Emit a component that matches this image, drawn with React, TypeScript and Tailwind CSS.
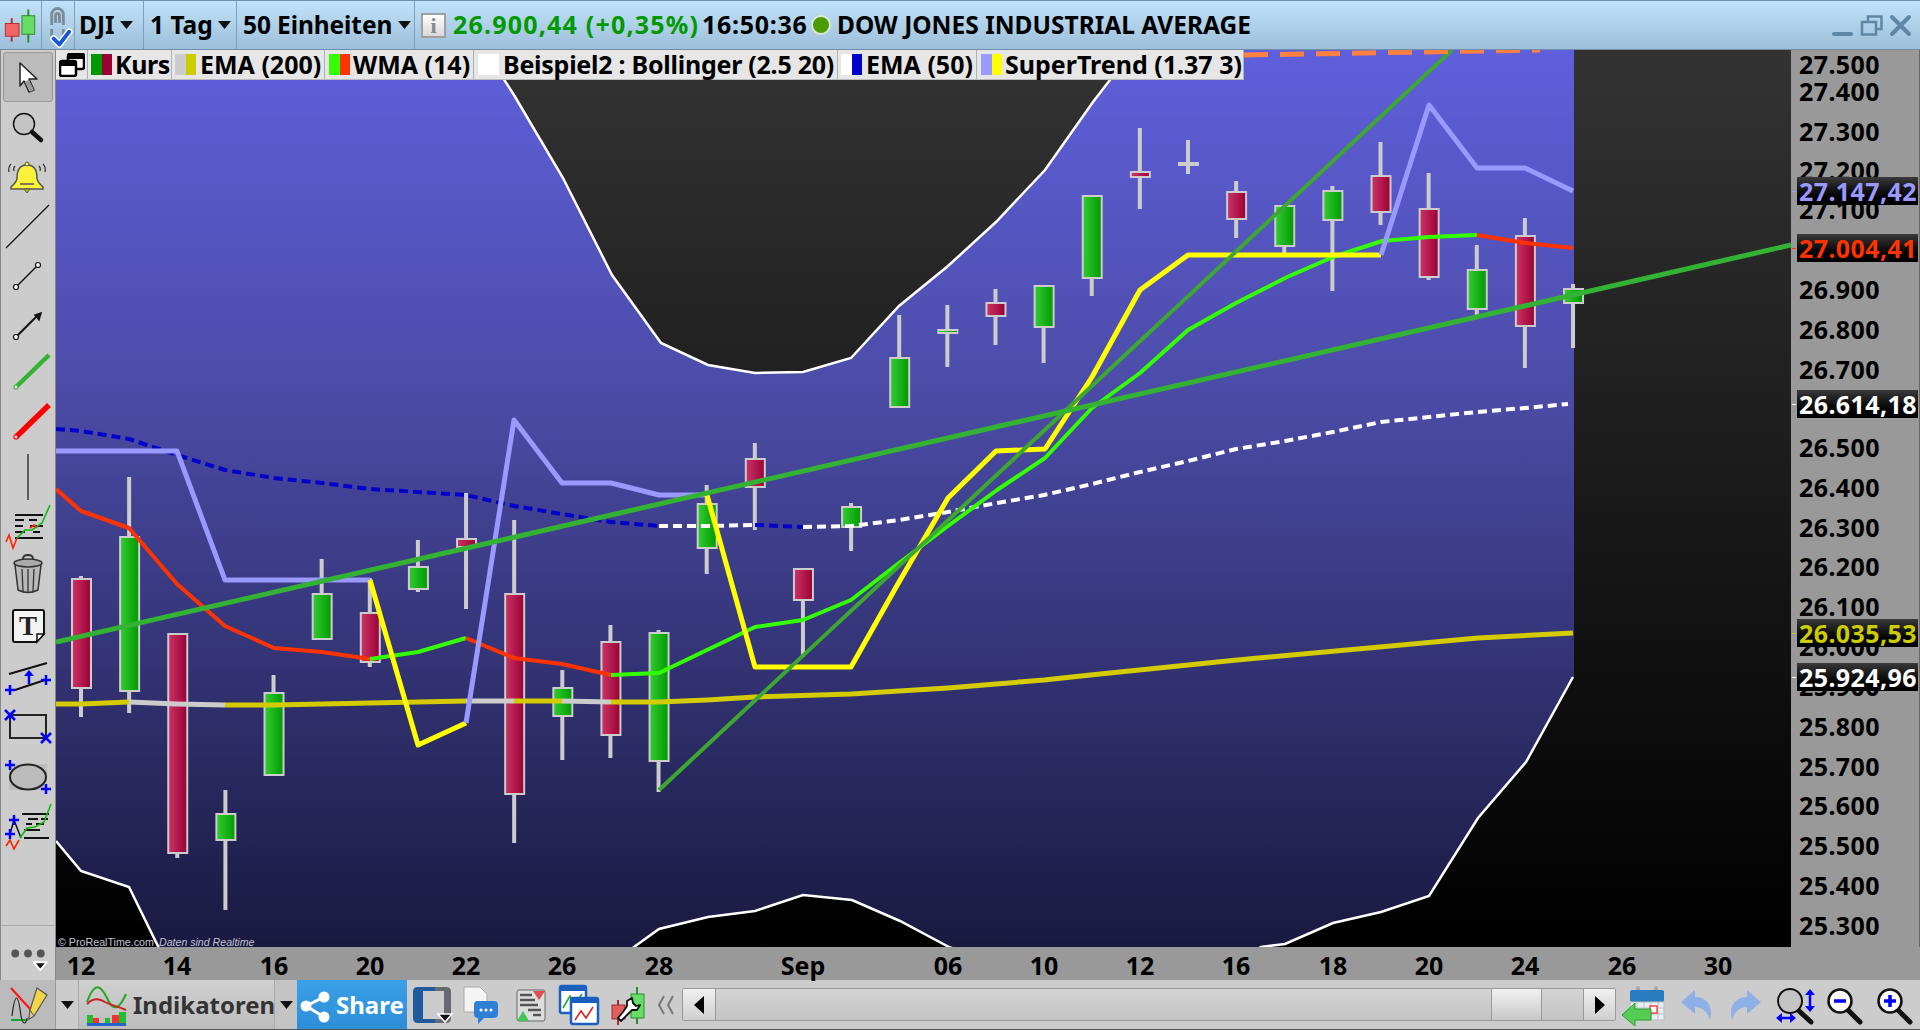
import React from 'react'

type Candle = [number, 'g' | 'r', number, number, number, number]

// wick top, body top, body bottom, wick bottom (page px)
const candles: Candle[] = [
  [0, 'r', 576, 578, 689, 717],
  [1, 'g', 477, 536, 692, 713],
  [2, 'r', 633, 633, 854, 858],
  [3, 'g', 790, 813, 841, 910],
  [4, 'g', 675, 692, 776, 776],
  [5, 'g', 559, 593, 640, 640],
  [6, 'r', 578, 612, 663, 667],
  [7, 'g', 540, 566, 590, 592],
  [8, 'r', 493, 538, 548, 609],
  [9, 'r', 520, 593, 795, 843],
  [10, 'g', 670, 687, 717, 760],
  [11, 'r', 625, 641, 736, 758],
  [12, 'g', 630, 632, 762, 792],
  [13, 'g', 485, 503, 549, 574],
  [14, 'r', 443, 458, 488, 530],
  [15, 'r', 568, 568, 601, 657],
  [16, 'g', 503, 506, 528, 551],
  [17, 'g', 315, 357, 408, 408],
  [18, 'g', 305, 329, 334, 367],
  [19, 'r', 289, 302, 317, 345],
  [20, 'g', 285, 285, 328, 363],
  [21, 'g', 195, 195, 279, 296],
  [22, 'r', 128, 171, 178, 209],
  [24, 'r', 181, 191, 220, 238],
  [25, 'g', 205, 205, 247, 255],
  [26, 'g', 186, 190, 221, 291],
  [27, 'r', 142, 175, 213, 225],
  [28, 'r', 173, 208, 278, 280],
  [29, 'g', 245, 269, 310, 316],
  [30, 'r', 218, 235, 327, 368],
  [31, 'g', 284, 288, 304, 348],
]

const prices: [string, number][] = [
  ['27.500', 64], ['27.400', 91], ['27.300', 131], ['27.200', 170], ['27.100', 209],
  ['26.900', 289], ['26.800', 329], ['26.700', 369], ['26.500', 447], ['26.400', 487],
  ['26.300', 527], ['26.200', 566], ['26.100', 606], ['26.000', 646], ['25.900', 686],
  ['25.800', 726], ['25.700', 766], ['25.600', 805], ['25.500', 845], ['25.400', 885], ['25.300', 925],
]

const tags: [string, number, string][] = [
  ['27.147,42', 191, '#9999ff'],
  ['27.004,41', 248, '#ff3300'],
  ['26.614,18', 404, '#ffffff'],
  ['26.035,53', 633, '#cccc00'],
  ['25.924,96', 677, '#ffffff'],
]

const dates: [string, number][] = [
  ['12', 81], ['14', 177], ['16', 274], ['20', 370], ['22', 466], ['26', 562], ['28', 659], ['Sep', 803],
  ['06', 948], ['10', 1044], ['12', 1140], ['16', 1236], ['18', 1333], ['20', 1429], ['24', 1525], ['26', 1622], ['30', 1718],
]

const upper = '485,50 514,95 563,178 612,275 661,343 708,365 755,373 803,372 851,358 899,306 948,266 996,222 1045,170 1093,102 1133,50'
const lower = '56,841 81,871 129,887 177,985 611,965 634,947 659,929 708,917 755,911 803,895 852,900 900,921 949,947 1000,965 1230,965 1261,947 1285,944 1333,923 1381,912 1429,896 1478,818 1526,762 1573,677'
const bluePoly = `56,50 ${upper} 1574,50 1574,677 ${lower.split(' ').reverse().join(' ')}`

function Chart() {
  return (
    <svg width="1735" height="897" viewBox="56 50 1735 897" className="block shrink-0">
      <defs>
        <linearGradient id="dark" gradientUnits="userSpaceOnUse" x1="0" y1="50" x2="0" y2="947">
          <stop offset="0" stopColor="#333333" />
          <stop offset="1" stopColor="#000000" />
        </linearGradient>
        <linearGradient id="blue" gradientUnits="userSpaceOnUse" x1="0" y1="50" x2="0" y2="947">
          <stop offset="0" stopColor="#5f5fdc" />
          <stop offset="0.39" stopColor="#4b4ba6" />
          <stop offset="1" stopColor="#191940" />
        </linearGradient>
        <linearGradient id="cg">
          <stop offset="0" stopColor="#33cc33" />
          <stop offset="1" stopColor="#009900" />
        </linearGradient>
        <linearGradient id="cr">
          <stop offset="0" stopColor="#cc3366" />
          <stop offset="1" stopColor="#990033" />
        </linearGradient>
      </defs>
      <rect x="56" y="50" width="1735" height="897" fill="url(#dark)" />
      <polygon points={bluePoly} fill="url(#blue)" />
      <polyline points={upper} fill="none" stroke="#fff" strokeWidth="2.5" />
      <polyline points={lower} fill="none" stroke="#fff" strokeWidth="2.5" />

      {candles.map(([i, c, wt, bt, bb, wb]) => {
        const x = 81 + 48.13 * i
        return (
          <g key={i}>
            <rect x={x - 2} y={wt} width="4" height={wb - wt} fill="#cccccc" />
            <rect x={x - 9} y={bt + 1} width="19" height={bb - bt - 2} fill={c === 'g' ? 'url(#cg)' : 'url(#cr)'} stroke="#cccccc" strokeWidth="2" />
          </g>
        )
      })}
      {/* doji without body */}
      <rect x="1186" y="140" width="4" height="34" fill="#cccccc" />
      <rect x="1178" y="162" width="21" height="4" fill="#cccccc" />

      {/* EMA 200 */}
      <g fill="none" strokeWidth="5">
        <polyline points="56,704 81,704 129,702" stroke="#d4cc00" />
        <polyline points="129,702 177,704 225,705" stroke="#cccccc" />
        <polyline points="225,705 274,705 370,703 466,701" stroke="#d4cc00" />
        <polyline points="466,701 514,701" stroke="#cccccc" />
        <polyline points="514,701 562,701" stroke="#d4cc00" />
        <polyline points="562,701 611,702" stroke="#cccccc" />
        <polyline points="611,702 659,702 707,700 755,697 851,694 899,691 948,688 996,684 1044,680 1100,674 1237,660 1478,638 1573,633" stroke="#d4cc00" />
      </g>

      {/* EMA 50 */}
      <g fill="none" strokeWidth="4" strokeDasharray="9 5">
        <polyline points="56,429 81,431 129,439 177,455 225,470 274,478 322,483 370,489 418,492 466,495 514,506 562,514 611,522 659,526" stroke="#0000cc" />
        <polyline points="659,526 707,526 755,525" stroke="#ffffff" />
        <polyline points="755,525 803,527" stroke="#0000cc" />
        <polyline points="803,527 851,526 899,520 948,512 997,503 1044,495 1092,484 1140,472 1188,461 1236,449 1285,441 1333,432 1381,422 1429,417 1477,412 1525,408 1568,404" stroke="#ffffff" />
      </g>

      {/* WMA 14 */}
      <g fill="none" strokeWidth="4" strokeLinejoin="round">
        <polyline points="56,489 81,511 129,528 177,584 225,626 274,648 322,652 370,659" stroke="#ff3300" />
        <polyline points="370,659 418,652 466,638" stroke="#33ff00" />
        <polyline points="466,638 514,658 562,664 611,675" stroke="#ff3300" />
        <polyline points="611,675 659,673 707,650 755,627 803,620 851,600 899,563 948,526 997,490 1045,458 1092,408 1140,373 1188,330 1236,303 1285,278 1333,257 1382,241 1429,237 1477,235" stroke="#33ff00" />
        <polyline points="1477,235 1525,243 1573,248" stroke="#ff3300" />
      </g>

      {/* SuperTrend */}
      <g fill="none" strokeWidth="5" strokeLinejoin="round">
        <polyline points="56,451 177,451 225,580 370,580" stroke="#9999ff" />
        <polyline points="370,580 418,745 466,723" stroke="#ffff00" />
        <polyline points="466,723 514,420 562,483 611,483 659,495 707,495" stroke="#9999ff" />
        <polyline points="707,495 755,667 851,667 899,582 948,498 996,451 1045,449 1092,377 1140,290 1188,255 1381,255" stroke="#ffff00" />
        <polyline points="1381,255 1429,105 1477,168 1525,168 1573,191" stroke="#9999ff" />
      </g>

      {/* trend lines */}
      <line x1="659" y1="790" x2="1452" y2="50" stroke="#3da82f" strokeWidth="4" />
      <line x1="56" y1="642" x2="1791" y2="245" stroke="#33b233" strokeWidth="5" />
      <line x1="1244" y1="55" x2="1540" y2="50" stroke="#ff8040" strokeWidth="5" strokeDasharray="24 12" />

      <text x="58" y="946" fill="#c4c4d4" fontSize="10.7" fontFamily="Liberation Sans, sans-serif">© ProRealTime.com</text>
      <text x="159" y="946" fill="#c4c4d4" fontSize="10.6" fontStyle="italic" fontFamily="Liberation Sans, sans-serif">Daten sind Realtime</text>
    </svg>
  )
}

function Caret() {
  return (
    <svg width="13" height="8" viewBox="0 0 13 8" className="block shrink-0">
      <path d="M0 0H13L6.5 8Z" fill="#111" />
    </svg>
  )
}

function Swatch({ a, b }: { a: string; b: string }) {
  return (
    <span className="flex h-[21px] w-[21px] shrink-0">
      <span className="h-full flex-1" style={{ background: a }} />
      <span className="h-full flex-1" style={{ background: b }} />
    </span>
  )
}

function TopBar() {
  return (
    <div className="flex h-[50px] items-stretch border-y border-[#6d8fab] bg-gradient-to-b from-[#c0e2fa] to-[#9ebfd9] text-[24.5px] font-bold text-black">
      <div className="flex w-[42px] items-center border-r border-[#7da0bd]">
        <svg width="42" height="48" viewBox="0 0 42 48">
          <path d="M29 8V42" stroke="#2e8b2e" strokeWidth="2" />
          <path d="M12 17V41" stroke="#b03030" strokeWidth="2" />
          <rect x="5.5" y="22.5" width="14" height="13" fill="#f06565" stroke="#b03030" />
          <rect x="22.5" y="14.5" width="13" height="19" fill="#66dd66" stroke="#2e8b2e" />
        </svg>
      </div>
      <div className="flex w-[33px] items-center border-r border-[#7da0bd]">
        <svg width="33" height="48" viewBox="42 0 33 48">
          <path d="M52 24V13a6 6 0 0 1 12 0V24M56 22V14a2 2 0 0 1 4 0V22" fill="none" stroke="#7d8c99" strokeWidth="3" />
          <path d="M52 28V34a6 6 0 0 0 12 0V28" fill="none" stroke="#7d8c99" strokeWidth="3" />
          <path d="M54 38L60 44L70 31" fill="none" stroke="#fff" strokeWidth="7" strokeLinecap="round" strokeLinejoin="round" />
          <path d="M54 38L60 44L70 31" fill="none" stroke="#1a56d8" strokeWidth="4" strokeLinecap="round" strokeLinejoin="round" />
        </svg>
      </div>
      <div className="flex w-[69px] items-center gap-[5px] border-r border-[#7da0bd] pl-[4px]">
        <span>DJI</span><Caret />
      </div>
      <div className="flex w-[93px] items-center gap-[5px] border-r border-[#7da0bd] pl-[6px]">
        <span>1 Tag</span><Caret />
      </div>
      <div className="flex w-[178px] items-center gap-[6px] border-r border-[#7da0bd] pl-[6px]">
        <span className="tracking-[-0.1px]">50 Einheiten</span><Caret />
      </div>
      <div className="flex flex-1 items-center">
        <div className="ml-[6px] flex h-[25px] w-[25px] items-center justify-center border-2 border-[#a0a0a0] bg-gradient-to-b from-white to-[#d8d8d8] font-['Liberation_Serif',serif] text-[22px] text-[#888]">i</div>
        <span className="ml-[7px] w-[249px] shrink-0 text-[25px] tracking-[1.2px] text-[#009900]">26.900,44 (+0,35%)</span>
        <span className="w-[109px] shrink-0 text-[25px] tracking-[0.7px]">16:50:36</span>
        <span className="h-[20px] w-[20px] shrink-0 rounded-full border-2 border-[#dbe8dd] bg-[#4a9d00]" />
        <span className="ml-[6px]">DOW JONES INDUSTRIAL AVERAGE</span>
        <svg width="90" height="48" viewBox="1830 0 90 48" className="ml-auto">
          <path d="M1834 33H1851" stroke="#5f86a5" strokeWidth="4" strokeLinecap="round" />
          <path d="M1868 20V15.5H1881.5V28H1876" fill="none" stroke="#5f86a5" strokeWidth="2.5" />
          <rect x="1862" y="21" width="14" height="12.5" fill="none" stroke="#5f86a5" strokeWidth="2.5" />
          <path d="M1892 16L1909 33M1909 16L1892 33" stroke="#5f86a5" strokeWidth="4" strokeLinecap="round" />
        </svg>
      </div>
    </div>
  )
}

function Legend() {
  const item = 'flex h-full shrink-0 items-center border-r border-[#b0b0b0]'
  return (
    <div className="absolute left-0 top-0 flex h-[30px] items-stretch border-b border-[#bbbbbb] bg-[#e6e6e6] text-[25px] font-bold text-black">
      <div className={`${item} w-[32px] justify-center`}>
        <svg width="26" height="24" viewBox="0 0 26 24">
          <rect x="9" y="1" width="16" height="15" rx="2" fill="#fff" stroke="#000" strokeWidth="2.5" />
          <rect x="1" y="8" width="16" height="15" rx="2" fill="#fff" stroke="#000" strokeWidth="2.5" />
          <path d="M9 6H25V3L23 1H11L9 3Z M1 13H17V10L15 8H3L1 10Z" fill="#000" />
        </svg>
      </div>
      <div className={`${item} w-[84px] gap-[3px] pl-[3px]`}><Swatch a="#009900" b="#990033" /><span className="tracking-[-0.4px]">Kurs</span></div>
      <div className={`${item} w-[153px] gap-[4px] pl-[3px]`}><Swatch a="#cccccc" b="#cccc00" />EMA (200)</div>
      <div className={`${item} w-[149px] gap-[3px] pl-[4px]`}><Swatch a="#33ff00" b="#ff3300" />WMA (14)</div>
      <div className={`${item} w-[364px] gap-[4px] pl-[4px]`}><Swatch a="#ffffff" b="#ffffff" /><span className="tracking-[-0.25px]">Beispiel2 : Bollinger (2.5 20)</span></div>
      <div className={`${item} w-[139px] gap-[4px] pl-[3px]`}><Swatch a="#ffffff" b="#0000cc" />EMA (50)</div>
      <div className={`${item} w-[267px] gap-[3px] pl-[4px]`}><Swatch a="#9999ff" b="#ffff00" />SuperTrend (1.37 3)</div>
    </div>
  )
}

function PriceAxis() {
  return (
    <div className="relative h-full w-[129px] border-r border-[#666] bg-[#999999] text-[25px] font-bold leading-none tracking-[0.4px] text-black">
      {prices.map(([p, y]) => (
        <span key={p} className="absolute left-[8px] -translate-y-1/2" style={{ top: y - 50 }}>{p}</span>
      ))}
      {tags.map(([p, y, c]) => (
        <React.Fragment key={p}>
          <span className="absolute left-[1px] h-[1px] w-[4px]" style={{ top: y - 50, background: c }} />
          <span
            className="absolute left-[6px] flex h-[28px] w-[121px] items-center bg-gradient-to-b from-[#3a3a3a] to-black pl-[2px]"
            style={{ top: y - 64, color: c }}
          >
            {p}
          </span>
        </React.Fragment>
      ))}
    </div>
  )
}

function ToolIcon({ base, children }: { base: number; children?: React.ReactNode }) {
  return (
    <svg width="50" height="50" viewBox={`3 ${base} 50 50`} className="block overflow-visible">
      {children}
    </svg>
  )
}

const Plus = ({ x, y }: { x: number; y: number }) => (
  <path d={`M${x - 5} ${y}H${x + 5}M${x} ${y - 5}V${y + 5}`} stroke="#0000ff" strokeWidth="2.5" />
)
const Cross = ({ x, y }: { x: number; y: number }) => (
  <path d={`M${x - 5} ${y - 5}L${x + 5} ${y + 5}M${x + 5} ${y - 5}L${x - 5} ${y + 5}`} stroke="#0000ff" strokeWidth="2.5" />
)

function LeftToolbar() {
  return (
    <div className="flex w-[56px] shrink-0 flex-col border-x border-[#888] bg-[#cccccc] pt-[2px]">
      <div className="ml-[2px] h-[50px] w-[50px] rounded-[3px] border border-[#999] bg-[#bbbbbb]">
        <svg width="48" height="48" viewBox="4 53 48 48" className="block">
          <path d="M20 63L37 79H29L34 90L29 92L24 81L20 86Z" fill="#fff" stroke="#222" strokeWidth="1.5" strokeLinejoin="round" />
          <path d="M29 80L34 90L30 92L25 81Z" fill="#999" />
        </svg>
      </div>
      <div className="ml-[2px]">
        <ToolIcon base={102}>
          <circle cx="24" cy="124" r="10.5" fill="#c4c4c4" stroke="#111" strokeWidth="1.5" />
          <path d="M32 132L41 140" stroke="#111" strokeWidth="4.5" strokeLinecap="round" />
        </ToolIcon>
        <ToolIcon base={152}>
          <path d="M27 165c-7 0-10 5-10 13c0 4-3 6-6 9v2h32v-2c-3-3-6-5-6-9c0-8-3-13-10-13z" fill="#fbf23c" stroke="#555" strokeWidth="1.5" />
          <path d="M20 184H34" stroke="#555" strokeWidth="1.5" />
          <path d="M24 189h6l-3 4z" fill="#c9b800" stroke="#555" />
          <circle cx="27" cy="164" r="2" fill="#fbf23c" stroke="#555" />
          <path d="M11 164q-3 3-2 8M15 166q-2 2-1 5M43 164q3 3 2 8M39 166q2 2 1 5" fill="none" stroke="#333" strokeWidth="1.2" />
        </ToolIcon>
        <ToolIcon base={202}><path d="M6 248L49 205" stroke="#111" strokeWidth="1.3" /></ToolIcon>
        <ToolIcon base={252}>
          <path d="M16 287L38 265" stroke="#111" strokeWidth="1.5" />
          <circle cx="16" cy="287" r="2.5" fill="#fff" stroke="#111" strokeWidth="1.2" />
          <circle cx="38" cy="265" r="2.5" fill="#fff" stroke="#111" strokeWidth="1.2" />
        </ToolIcon>
        <ToolIcon base={302}>
          <path d="M16 337L38 315" stroke="#111" strokeWidth="2" />
          <path d="M41 313L35 315L39 320Z" fill="#111" stroke="#111" strokeWidth="1.5" />
          <circle cx="16" cy="337" r="2.5" fill="#fff" stroke="#111" strokeWidth="1.2" />
        </ToolIcon>
        <ToolIcon base={352}>
          <path d="M16 387L49 355" stroke="#33b233" strokeWidth="4.5" />
          <circle cx="16" cy="387" r="2" fill="#fff" stroke="#33b233" strokeWidth="1.2" />
        </ToolIcon>
        <ToolIcon base={402}>
          <path d="M16 437L49 405" stroke="#ff0000" strokeWidth="5.5" />
          <circle cx="16" cy="437" r="2" fill="#fff" stroke="#ff0000" strokeWidth="1.2" />
        </ToolIcon>
        <ToolIcon base={452}><path d="M28 454V500" stroke="#111" strokeWidth="1.2" /></ToolIcon>
        <ToolIcon base={502}>
          <path d="M15 515H43M15 520H24M29 520H37M15 526H23M30 526H43M15 532H25M33 532H40M15 538H43" stroke="#111" strokeWidth="1.8" />
          <path d="M6 542L9 535L13 548L17 538" fill="none" stroke="#ff2200" strokeWidth="1.6" />
          <path d="M17 538L25 530L32 530L42 523L50 505" fill="none" stroke="#11bb11" strokeWidth="1.6" />
          <path d="M30 528L34 525L37 528" fill="none" stroke="#ff2200" strokeWidth="1.6" />
        </ToolIcon>
        <ToolIcon base={552}>
          <path d="M15 565L18 590Q28 595 38 590L41 565Z" fill="#b8b8b8" stroke="#333" strokeWidth="1.5" />
          <path d="M22 569L23 591M28 569V592M34 569L33 591" stroke="#333" strokeWidth="1.3" />
          <ellipse cx="28" cy="563" rx="14" ry="4" fill="#aaa" stroke="#333" strokeWidth="1.5" />
          <path d="M23 559q0-4 5-4t5 4" fill="none" stroke="#333" strokeWidth="1.8" />
        </ToolIcon>
        <ToolIcon base={602}>
          <path d="M13 612a2 2 0 0 1 2-2H42a2 2 0 0 1 2 2V634L36 642H15a2 2 0 0 1-2-2Z" fill="#f3f3f3" stroke="#111" strokeWidth="2" />
          <path d="M44 634H37V642Z" fill="#fff" stroke="#111" strokeWidth="1.5" />
          <text x="28" y="635" textAnchor="middle" fontSize="27" fontWeight="700" fontFamily="Liberation Serif, serif" fill="#222">T</text>
        </ToolIcon>
        <ToolIcon base={652}>
          <path d="M9 674L47 663M15 690L45 680" stroke="#111" strokeWidth="2" />
          <path d="M29 684V674" stroke="#0000ff" strokeWidth="2.5" />
          <path d="M24 676L29 670L34 676Z" fill="#0000ff" />
          <Plus x={10} y={690} />
          <Plus x={46} y={680} />
        </ToolIcon>
        <ToolIcon base={702}>
          <rect x="10" y="715" width="36" height="23" fill="none" stroke="#222" strokeWidth="2" />
          <Cross x={10} y={715} />
          <Cross x={46} y={738} />
        </ToolIcon>
        <ToolIcon base={752}>
          <rect x="9" y="764" width="38" height="26" fill="#bcbcbc" />
          <ellipse cx="28" cy="777" rx="18" ry="12.5" fill="none" stroke="#222" strokeWidth="2" />
          <Plus x={10} y={765} />
          <Plus x={46} y={789} />
        </ToolIcon>
        <ToolIcon base={802}>
          <path d="M22 814H49M28 819H38M41 819H48M26 824H32M36 824H44M24 830H40M24 838H49" stroke="#111" strokeWidth="1.8" />
          <path d="M10 834L14 820L21 838" fill="none" stroke="#111" strokeWidth="1.5" />
          <path d="M20 838L27 828L35 827L44 822L51 804" fill="none" stroke="#11bb11" strokeWidth="1.6" />
          <path d="M6 846L10 840L14 849L19 840" fill="none" stroke="#ff2200" strokeWidth="1.6" />
          <Plus x={14} y={820} />
          <Plus x={10} y={834} />
        </ToolIcon>
      </div>
      <div className="mt-auto flex h-[55px] flex-col border-t border-[#aaaaaa]">
        <svg width="54" height="55" viewBox="1 925 54 55" className="block">
          <circle cx="15" cy="953" r="4" fill="#555" />
          <circle cx="28" cy="953" r="4" fill="#555" />
          <circle cx="41" cy="953" r="4" fill="#555" />
          <path d="M34 962H47L40.5 970Z" fill="#111" stroke="#fff" strokeWidth="2" strokeLinejoin="round" />
        </svg>
      </div>
    </div>
  )
}

function Icon({ x, w, children }: { x: number; w: number; children?: React.ReactNode }) {
  return (
    <svg width={w} height="50" viewBox={`${x} 980 ${w} 50`} className="block shrink-0">
      {children}
    </svg>
  )
}

function BottomBar() {
  return (
    <div className="flex h-[50px] items-stretch border-b border-[#555] bg-[#cccccc]">
      <div className="w-[56px] shrink-0 border-r border-[#999] bg-[#bbbbbb]">
        <Icon x={0} w={55}>
          <path d="M11 1020H28" stroke="#11aa33" strokeWidth="2" />
          <path d="M12 1016c3-24 6-24 9 0c2 10 5 8 6 2" fill="none" stroke="#222" strokeWidth="1.2" />
          <path d="M11 988L31 1010" stroke="#ff1111" strokeWidth="2" />
          <path d="M37 988L47 995L34 1016L29 1019L30 1010Z" fill="#f4d548" stroke="#555" strokeWidth="1.2" />
          <path d="M30 1010L34 1016L29 1019Z" fill="#e9c4a0" stroke="#555" strokeWidth="1" />
        </Icon>
      </div>
      <div className="flex w-[23px] shrink-0 items-center justify-center border-r border-[#aaa]"><Caret /></div>
      <div className="flex w-[196px] shrink-0 items-center border-r border-[#aaa] bg-gradient-to-b from-[#d0d0d0] to-[#bdbdbd]">
        <Icon x={79} w={52}>
          <path d="M87 1002c8-22 14-16 20-4c6 14 12 12 19-4" fill="none" stroke="#22aa22" strokeWidth="2" />
          <path d="M87 1004c6-6 12-6 18-2c7 4 13 4 21 8" fill="none" stroke="#cc2222" strokeWidth="2" />
          <path d="M87 1015h6v8h-6zM105 1018h5v5h-5zM119 1012h7v11h-7z" fill="#22bb33" />
          <path d="M93 1018h6v5h-6zM112 1015h7v8h-7z" fill="#ee3333" />
          <rect x="87" y="1023" width="39" height="3" fill="#2266cc" />
        </Icon>
        <span className="ml-[2px] text-[24px] font-bold text-[#333]">Indikatoren</span>
      </div>
      <div className="flex w-[22px] shrink-0 items-center justify-center bg-[#c4c4c4]"><Caret /></div>
      <div className="flex w-[110px] shrink-0 items-center bg-gradient-to-b from-[#3aa0e8] to-[#2d8ed8] text-[24px] font-bold text-white">
        <Icon x={297} w={37}>
          <path d="M306 1006L324 997M306 1006L324 1017" stroke="#fff" strokeWidth="3" />
          <circle cx="306" cy="1006" r="5.5" fill="#fff" />
          <circle cx="324" cy="997" r="5.5" fill="#fff" />
          <circle cx="324" cy="1017" r="5.5" fill="#fff" />
        </Icon>
        <span className="ml-[2px]">Share</span>
      </div>
      <Icon x={407} w={50}>
        <path d="M435 987H418Q413 987 413 992V1018Q413 1023 418 1023H435V1019H423V991H435Z" fill="#1f5a9c" />
        <path d="M435 987H446Q451 987 451 992V1018Q451 1023 446 1023H435V1019H444V991H435Z" fill="#666a70" />
        <path d="M438 1014H452L445 1022Z" fill="#111" stroke="#fff" strokeWidth="1.5" />
      </Icon>
      <Icon x={457} w={50}>
        <path d="M464 987H480L487 994V1012H464Z" fill="#f4f4f4" stroke="#aaa" />
        <path d="M477 1001H494Q498 1001 498 1005V1014Q498 1018 494 1018H484L478 1024V1018Q474 1018 474 1014V1005Q474 1001 477 1001Z" fill="#2f7fd6" />
        <circle cx="481" cy="1010" r="1.5" fill="#fff" />
        <circle cx="486" cy="1010" r="1.5" fill="#fff" />
        <circle cx="491" cy="1010" r="1.5" fill="#fff" />
      </Icon>
      <Icon x={507} w={50}>
        <rect x="517" y="990" width="28" height="31" rx="2" fill="#ddd" stroke="#666" />
        <path d="M520 995H532M520 1000H535M520 1005H538M528 1010H541M533 1015H541" stroke="#555" strokeWidth="2.5" />
        <path d="M533 991H545L539 1000Z" fill="#e05050" />
        <path d="M517 1021L523 1011L529 1021Z" fill="#44c455" />
      </Icon>
      <Icon x={557} w={48}>
        <rect x="560" y="986" width="26" height="27" rx="2" fill="#fff" stroke="#1a5fc0" strokeWidth="2.5" />
        <rect x="561" y="986" width="24" height="5" fill="#1a5fc0" />
        <path d="M563 1008L570 996L575 1004L582 994" fill="none" stroke="#22aa22" strokeWidth="1.6" />
        <rect x="571" y="998" width="27" height="26" rx="2" fill="#fff" stroke="#1a5fc0" strokeWidth="2.5" />
        <rect x="572" y="998" width="25" height="5" fill="#1a5fc0" />
        <path d="M575 1020L581 1011L586 1018L593 1007" fill="none" stroke="#dd2222" strokeWidth="1.6" />
      </Icon>
      <Icon x={605} w={45}>
        <path d="M637 987V1024" stroke="#2e8b2e" strokeWidth="2" />
        <rect x="631" y="994" width="13" height="24" fill="#66dd66" stroke="#2e8b2e" />
        <path d="M618 1000V1025" stroke="#a02c2c" strokeWidth="2" />
        <rect x="612" y="1005" width="13" height="14" fill="#e06060" stroke="#a02c2c" />
        <path d="M632 998L627 1001L627 1006L623 1012L618 1018L621 1021L627 1015L632 1010L637 1010L640 1005L636 1006L633 1003Z" fill="#fff" stroke="#111" strokeWidth="1.8" strokeLinejoin="round" />
      </Icon>
      <Icon x={650} w={32}>
        <path d="M664 996L659 1005L664 1014M673 996L668 1005L673 1014" fill="none" stroke="#777" strokeWidth="2" />
      </Icon>
      <div className="my-[8px] flex w-[934px] shrink-0 overflow-hidden rounded-[2px] border border-[#999] bg-gradient-to-b from-[#d4d4d4] to-[#c4c4c4]">
        <div className="flex w-[33px] items-center justify-center border-r border-[#999] bg-gradient-to-b from-[#f0f0f0] to-[#cfcfcf]">
          <svg width="10" height="18" viewBox="0 0 10 18"><path d="M10 0V18L0 9Z" fill="#000" /></svg>
        </div>
        <div className="w-[775px]" />
        <div className="w-[51px] border-x border-[#999] bg-gradient-to-b from-[#f2f2f2] to-[#c8c8c8]" />
        <div className="w-[41px]" />
        <div className="flex flex-1 items-center justify-center border-l border-[#999] bg-gradient-to-b from-[#f0f0f0] to-[#cfcfcf]">
          <svg width="10" height="18" viewBox="0 0 10 18"><path d="M0 0V18L10 9Z" fill="#000" /></svg>
        </div>
      </div>
      <Icon x={1616} w={304}>
        {/* calendar */}
        <rect x="1636" y="986" width="4" height="8" rx="2" fill="#aaa" />
        <rect x="1654" y="986" width="4" height="8" rx="2" fill="#aaa" />
        <rect x="1630" y="990" width="34" height="12" rx="2" fill="#2a7cc0" />
        <rect x="1630" y="1002" width="34" height="18" fill="#e8eef2" stroke="#bbb" />
        <path d="M1637 1002V1020M1644 1002V1020M1651 1002V1020M1658 1002V1020M1630 1008H1664M1630 1014H1664" stroke="#b8c4cc" />
        <rect x="1650" y="1006" width="7" height="7" fill="#fff" stroke="#ff4444" strokeWidth="1.5" />
        <path d="M1622 1015L1635 1003V1009H1651V1020H1635V1026Z" fill="#55cc55" stroke="#2fa02f" strokeWidth="1" />
        {/* undo / redo */}
        <path d="M1681 1002L1695 990V997C1706 997 1714 1006 1710 1020C1707 1011 1702 1007 1695 1007V1014Z" fill="#8fb0e6" />
        <path d="M1761 1002L1747 990V997C1736 997 1728 1006 1732 1020C1735 1011 1740 1007 1747 1007V1014Z" fill="#8fb0e6" />
        {/* auto zoom */}
        <path d="M1798 1010L1811 1022" stroke="#111" strokeWidth="5" strokeLinecap="round" />
        <circle cx="1790" cy="1001" r="12" fill="#c4c4c4" stroke="#111" strokeWidth="2" />
        <path d="M1810 993V1008" stroke="#0000ff" strokeWidth="2.5" />
        <path d="M1805 995L1810 989L1815 995ZM1805 1006L1810 1012L1815 1006Z" fill="#0000ff" />
        <path d="M1780 1018H1792" stroke="#0000ff" strokeWidth="2.5" />
        <path d="M1782 1013L1776 1018L1782 1023ZM1790 1013L1796 1018L1790 1023Z" fill="#0000ff" />
        {/* zoom out */}
        <path d="M1848 1010L1860 1022" stroke="#111" strokeWidth="5" strokeLinecap="round" />
        <circle cx="1840" cy="1001" r="11.5" fill="#fff" stroke="#111" strokeWidth="2.5" />
        <path d="M1834 1001H1846" stroke="#0000ff" strokeWidth="3.5" />
        {/* zoom in */}
        <path d="M1898 1010L1910 1022" stroke="#111" strokeWidth="5" strokeLinecap="round" />
        <circle cx="1890" cy="1001" r="11.5" fill="#fff" stroke="#111" strokeWidth="2.5" />
        <path d="M1884 1001H1896M1890 995V1007" stroke="#0000ff" strokeWidth="3.5" />
      </Icon>
    </div>
  )
}

export default function App() {
  return (
    <div className="flex h-[1030px] w-[1920px] flex-col overflow-hidden bg-[#999999] font-['Noto_Sans',sans-serif]">
      <TopBar />
      <div className="flex h-[930px] items-stretch">
        <LeftToolbar />
        <div className="flex flex-1 flex-col">
          <div className="relative flex h-[897px]">
            <Chart />
            <PriceAxis />
            <Legend />
          </div>
          <div className="relative h-[33px] bg-[#999999] text-[25px] font-bold leading-none text-black">
            {dates.map(([d, x], i) => (
              <span key={i} className="absolute top-[6px] -translate-x-1/2" style={{ left: x - 56 }}>{d}</span>
            ))}
          </div>
        </div>
      </div>
      <BottomBar />
    </div>
  )
}
